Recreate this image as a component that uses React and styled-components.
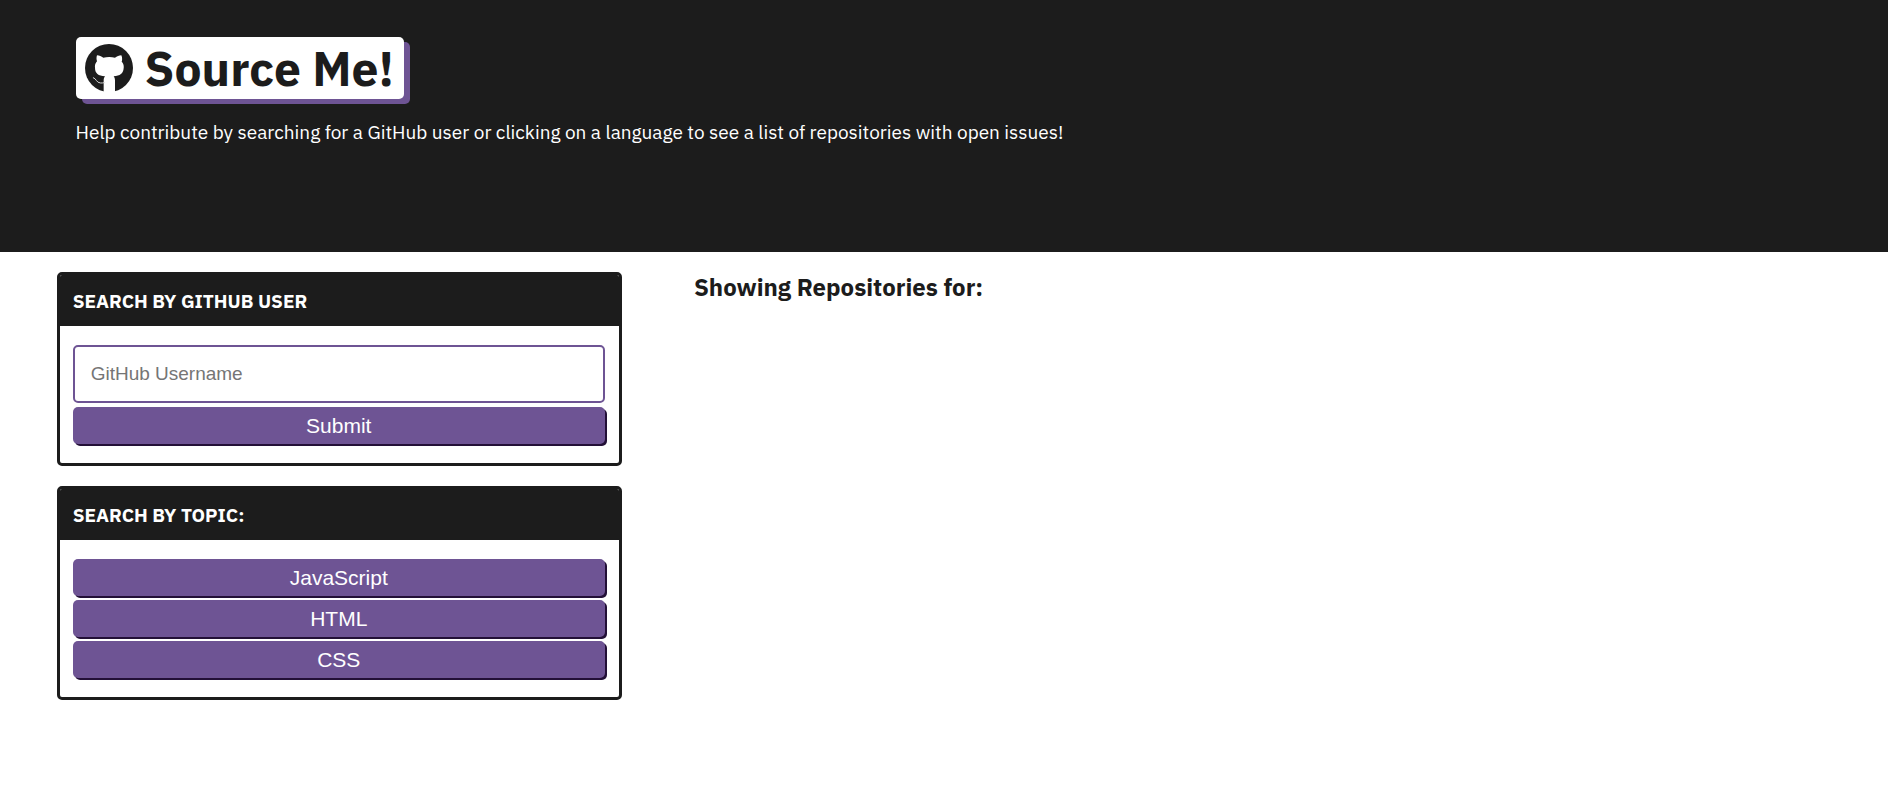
import React from "react";
import styled, { createGlobalStyle } from "styled-components";

const ink = "#1c1c1c";
const violet = "#6e5494";
const shade = "#231037";
const display = `"IBM Plex Sans", Roboto, sans-serif`;
const body = `"Liberation Sans", Arial, sans-serif`;

const GlobalStyle = createGlobalStyle`
  *, *::before, *::after { box-sizing: border-box; }
  body { margin: 0; background: #fff; color: ${ink}; font-family: ${display}; }
  h1, h2, h3, p { margin: 0; }
`;

const Hero = styled.header`
  min-height: 252px;
  padding: 37px 4% 0;
  background: ${ink};
  color: #fff;
`;

const Logo = styled.h1`
  display: inline-flex;
  align-items: center;
  gap: 12px;
  height: 62px;
  padding: 0 10px 0 9px;
  border-radius: 5px;
  background: #fff;
  color: ${ink};
  box-shadow: 6px 5px 0 ${violet};
  font-size: 48px;
  font-weight: 700;
  line-height: 62px;
`;

const Mark = styled.svg`
  flex: none;
  width: 48px;
  height: 48px;
`;

const Tagline = styled.p`
  margin-top: 20px;
  font-size: 19px;
  line-height: 26px;
`;

const Main = styled.main`
  display: flex;
  align-items: flex-start;
  padding: 20px 3%;
`;

const Sidebar = styled.div`
  display: flex;
  flex: 0 0 31.85%;
  flex-direction: column;
  gap: 20px;
`;

const Card = styled.section`
  overflow: hidden;
  border: 3px solid ${ink};
  border-radius: 5px;
`;

const CardTitle = styled.h3`
  padding: 13px 13px 12px;
  background: ${ink};
  color: #fff;
  font-size: 19px;
  font-weight: 700;
  line-height: 26px;
  text-transform: uppercase;
`;

const Stack = styled.div`
  display: flex;
  flex-direction: column;
  gap: 4px;
  padding: 19px 14px 19px 13px;
`;

const TextInput = styled.input`
  height: 58px;
  padding: 0 16px;
  border: 2px solid ${violet};
  border-radius: 5px;
  background: #fff;
  font-family: ${body};
  font-size: 19px;
  &::placeholder { color: #757575; }
`;

const Button = styled.button`
  height: 37px;
  padding: 0 16px;
  border: 0;
  border-radius: 5px;
  background: ${violet};
  box-shadow: 2px 2px 0 ${shade};
  color: #fff;
  font-family: ${body};
  font-size: 21px;
  cursor: pointer;
`;

const Results = styled.section`
  flex: 1;
  padding-left: 72px;
`;

const ResultsTitle = styled.h2`
  font-size: 24px;
  font-weight: 700;
  line-height: 30px;
`;

const topics = ["JavaScript", "HTML", "CSS"];

function GitHubMark() {
  return (
    <Mark viewBox="0 0 144 144" aria-hidden="true">
      <circle cx="72" cy="72" r="72" fill={ink} />
      <path
        fill="#fff"
        d="M36 34 C43 34 49 37 55 41 C66 38 79 38 90 41 C96 37 102 34 109 34 C112 41 112 47 110 53 C115 58 117 64 116 72 C115 89 105 95 86 97 C89 101 90 105 90 110 V146 H56 V110 C56 105 57 101 60 97 C40 95 30 88 30 71 C29 64 31 58 36 52 C34 46 34 40 36 34 Z"
      />
      <path
        d="M25 101 C34 103 34 117 47 117 C51 117 54 117 58 116"
        fill="none"
        stroke="#d8d8d8"
        strokeWidth="3"
        strokeLinecap="round"
      />
    </Mark>
  );
}

export default function App() {
  return (
    <>
      <GlobalStyle />
      <Hero>
        <Logo>
          <GitHubMark />
          Source Me!
        </Logo>
        <Tagline>
          Help contribute by searching for a GitHub user or clicking on a
          language to see a list of repositories with open issues!
        </Tagline>
      </Hero>
      <Main>
        <Sidebar>
          <Card>
            <CardTitle>Search by GitHub User</CardTitle>
            <Stack as="form" onSubmit={(event) => event.preventDefault()}>
              <TextInput type="text" aria-label="GitHub Username" placeholder="GitHub Username" />
              <Button type="submit">Submit</Button>
            </Stack>
          </Card>
          <Card>
            <CardTitle>Search by topic:</CardTitle>
            <Stack>
              {topics.map((topic) => (
                <Button key={topic} type="button">{topic}</Button>
              ))}
            </Stack>
          </Card>
        </Sidebar>
        <Results>
          <ResultsTitle>Showing Repositories for:</ResultsTitle>
        </Results>
      </Main>
    </>
  );
}
